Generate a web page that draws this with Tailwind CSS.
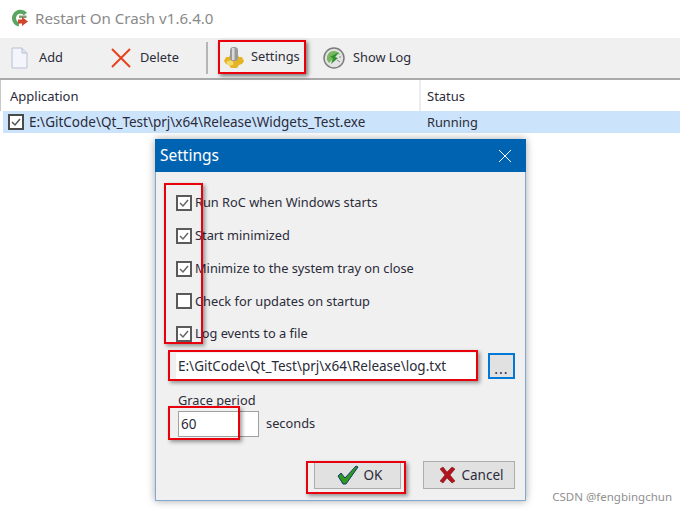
<!DOCTYPE html>
<html lang="en">
<head>
  <meta charset="UTF-8" />
  <title>Restart On Crash</title>
  <script src="https://cdn.jsdelivr.net/npm/@tailwindcss/browser@4"></script>
</head>
<body class="relative w-[680px] h-[510px] overflow-hidden bg-white text-[12.800px] text-[#2b2b3a] font-['Noto_Sans','Open_Sans',sans-serif]">

  <!-- main window -->
  <div class="flex items-center h-[38px] pb-[2px] pl-[11px] gap-[6px]">
    <svg width="18" height="18" viewBox="0 0 18 18">
      <path d="M14.500 5A6.500 6.500 0 1 0 8 15.500" fill="none" stroke="#5aa564" stroke-width="4"/>
      <path d="M8 6.500h7.500V9H8z" fill="#7f9a6e"/>
      <path d="M7 10.500h4V8l6 4.500L11 17v-2.500H7z" fill="#d2452f"/>
    </svg>
    <span class="text-[15.100px] text-[#8a8a8a]">Restart On Crash v1.6.4.0</span>
  </div>

  <div class="flex items-center h-[42px] bg-[#f0f0f0] border-b-2 border-[#a9a9a9]">
    <svg class="ml-[11px]" width="17" height="22" viewBox="0 0 17 22">
      <path d="M1 1h10l5 5v15H1z" fill="#f3f5fb" stroke="#b9c0d6"/>
      <path d="M11 1v5h5" fill="#dfe3ef" stroke="#b9c0d6"/>
    </svg>
    <span class="ml-[11px] w-[24px]">Add</span>
    <svg class="ml-[47px]" width="22" height="22" viewBox="0 0 22 22">
      <path d="M2 2l18 18M20 2L2 20" stroke="#e8401c" stroke-width="2"/>
    </svg>
    <span class="ml-[8px] w-[39px]">Delete</span>
    <div class="ml-[27px] w-[2px] h-[32px] bg-[#b5b5b5]"></div>
    <div class="flex items-center ml-[10px] w-[88px] h-[34px] -mt-[2px] border-2 border-[#e8000d] shadow-[2px_2px_4px_rgba(0,0,0,0.5)] pl-[4px]">
      <svg width="20" height="22" viewBox="0 0 20 22">
        <path d="M2 11l3 0 1-2h8l1 2 3 0 2 4-2 3-3 1-2 3H7l-2-3-3-1-2-3z" fill="#e6b422"/>
        <ellipse cx="6" cy="17" rx="3.500" ry="2.500" fill="#f6dc70"/>
        <rect x="6" y="1" width="8" height="14" rx="3.500" fill="#9a9a9a"/>
        <rect x="8" y="2" width="2.500" height="12" fill="#d9d9d9"/>
      </svg>
      <span class="ml-[7px]">Settings</span>
    </div>
    <svg class="ml-[17px]" width="22" height="22" viewBox="0 0 22 22">
      <circle cx="11" cy="11" r="10" fill="#e4e4e4" stroke="#7d7d7d" stroke-width="1.500"/>
      <path d="M11 4a7 7 0 0 0-5 12l9-9 2 1a7 7 0 0 0-6-4z" fill="#79b862"/>
      <path d="M16 5l-4 5 3 1-7 6 2-6-3-1z" fill="#2f8f2f"/>
      <path d="M14 13l3 2M16 10l2 0" stroke="#8a8a8a" stroke-width="1"/>
    </svg>
    <span class="ml-[8px]">Show Log</span>
  </div>

  <div class="flex items-center h-[31px] border-l border-[#c9c9c9] text-[13px]">
    <div class="w-[420px] h-full flex items-center pl-[9px] pt-[3px] border-r-2 border-[#ececec]">Application</div>
    <div class="pl-[6px] pt-[3px]">Status</div>
  </div>
  <div class="flex items-center h-[22px] ml-[3px] bg-[#cce4fb] text-[13.500px]">
    <div class="flex items-center justify-center w-[16px] h-[16px] ml-[5px] border-2 border-[#4a4a4a] bg-white">
      <svg width="12" height="12" viewBox="0 0 12 12"><path d="M2 6l3 3 5-6" fill="none" stroke="#555" stroke-width="1.500"/></svg>
    </div>
    <span class="w-[395px] ml-[5px] pt-[1px]">E:\GitCode\Qt_Test\prj\x64\Release\Widgets_Test.exe</span>
    <span class="ml-[3px] pt-[1px] text-[12.800px]">Running</span>
  </div>

  <!-- settings dialog -->
  <div class="absolute left-[155px] top-[139px] w-[371px] h-[362px] flex flex-col bg-[#f0f0f0] border-x border-b border-[#7fa9d2] shadow-[0_0_8px_rgba(0,0,0,0.35)]">
    <div class="flex items-center justify-between h-[33px] -mx-px shrink-0 bg-[#0063b1] pl-[5px] pr-[14px] text-white text-[15.500px]">
      <span>Settings</span>
      <svg width="14" height="14" viewBox="0 0 14 14"><path d="M1 1l12 12M13 1L1 13" stroke="#fff" stroke-width="1"/></svg>
    </div>

    <div class="flex flex-col gap-[16.750px] pl-[20px] pt-[23px]">
      <label class="flex items-center gap-[3px] h-[16px]">
        <span class="flex items-center justify-center w-[16px] h-[16px] border-2 border-[#5a5a5a] bg-white"><svg width="12" height="12" viewBox="0 0 12 12"><path d="M2 6l3 3 5-6" fill="none" stroke="#666" stroke-width="1.500"/></svg></span>
        Run RoC when Windows starts
      </label>
      <label class="flex items-center gap-[3px] h-[16px]">
        <span class="flex items-center justify-center w-[16px] h-[16px] border-2 border-[#5a5a5a] bg-white"><svg width="12" height="12" viewBox="0 0 12 12"><path d="M2 6l3 3 5-6" fill="none" stroke="#666" stroke-width="1.500"/></svg></span>
        Start minimized
      </label>
      <label class="flex items-center gap-[3px] h-[16px]">
        <span class="flex items-center justify-center w-[16px] h-[16px] border-2 border-[#5a5a5a] bg-white"><svg width="12" height="12" viewBox="0 0 12 12"><path d="M2 6l3 3 5-6" fill="none" stroke="#666" stroke-width="1.500"/></svg></span>
        Minimize to the system tray on close
      </label>
      <label class="flex items-center gap-[3px] h-[16px]">
        <span class="w-[16px] h-[16px] border-2 border-[#5a5a5a] bg-white"></span>
        Check for updates on startup
      </label>
      <label class="flex items-center gap-[3px] h-[16px]">
        <span class="flex items-center justify-center w-[16px] h-[16px] border-2 border-[#5a5a5a] bg-white"><svg width="12" height="12" viewBox="0 0 12 12"><path d="M2 6l3 3 5-6" fill="none" stroke="#666" stroke-width="1.500"/></svg></span>
        Log events to a file
      </label>
    </div>

    <div class="flex items-center gap-[12px] ml-[20px] mt-[11px]">
      <div class="flex items-center w-[300px] h-[26px] pl-[2px] bg-white text-[13.500px]">E:\GitCode\Qt_Test\prj\x64\Release\log.txt</div>
      <div class="flex items-center justify-center w-[27px] h-[26px] pt-[5px] border-2 border-[#0078d7] bg-[#e1e1e1] text-[14px] tracking-[1px]">...</div>
    </div>

    <div class="ml-[22px] mt-[11px] h-[21px] leading-[21px]">Grace period</div>
    <div class="flex items-center ml-[22px] gap-[7px]">
      <div class="flex items-center w-[81px] h-[26px] pl-[2px] bg-white border border-[#a0a0a0] text-[13.500px]">60</div>
      <span>seconds</span>
    </div>

    <div class="flex justify-end gap-[22px] mt-[24px] pr-[10px] text-[13.500px]">
      <div class="flex items-center justify-center gap-[5px] pl-[4px] w-[87px] h-[28px] bg-[#e1e1e1] border border-[#adadad]">
        <svg width="22" height="20" viewBox="0 0 22 20"><path d="M1 11l3-3 4 5L19 1l2 1L9 19H6z" fill="#2f9a1f" stroke="#12366b" stroke-width="1"/></svg>
        OK
      </div>
      <div class="flex items-center justify-center gap-[5px] pl-[4px] w-[92px] h-[28px] bg-[#e1e1e1] border border-[#adadad]">
        <svg width="18" height="18" viewBox="0 0 18 18"><path d="M2 3l3-2 4 5 5-5 3 2-5 6 5 6-3 2-5-5-4 5-3-2 5-6z" fill="#b3131b" stroke="#6d0c12" stroke-width="0.500"/></svg>
        Cancel
      </div>
    </div>
  </div>

  <!-- red annotation boxes -->
  <div class="absolute left-[164px] top-[183px] w-[39px] h-[161px] border-2 border-[#e8000d] shadow-[2px_2px_4px_rgba(0,0,0,0.4)]"></div>
  <div class="absolute left-[168px] top-[350px] w-[310px] h-[31px] border-2 border-[#e8000d] shadow-[2px_2px_4px_rgba(0,0,0,0.4)]"></div>
  <div class="absolute left-[168px] top-[406px] w-[72px] h-[34px] border-2 border-[#e8000d] shadow-[2px_2px_4px_rgba(0,0,0,0.4)]"></div>
  <div class="absolute left-[306px] top-[461px] w-[100px] h-[33px] border-2 border-[#e8000d] shadow-[2px_2px_4px_rgba(0,0,0,0.4)]"></div>

  <div class="absolute right-[8px] bottom-[8px] text-[11.500px] leading-none text-[#8f8f8f]">CSDN @fengbingchun</div>
</body>
</html>
